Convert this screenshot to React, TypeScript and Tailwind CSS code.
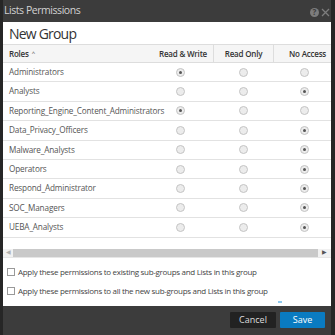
import React from 'react';

type Access = 'rw' | 'ro' | 'na';

const roles: { name: string; access: Access }[] = [
  { name: 'Administrators', access: 'rw' },
  { name: 'Analysts', access: 'na' },
  { name: 'Reporting_Engine_Content_Administrators', access: 'rw' },
  { name: 'Data_Privacy_Officers', access: 'na' },
  { name: 'Malware_Analysts', access: 'na' },
  { name: 'Operators', access: 'na' },
  { name: 'Respond_Administrator', access: 'na' },
  { name: 'SOC_Managers', access: 'na' },
  { name: 'UEBA_Analysts', access: 'na' },
];

function Radio({ checked }: { checked: boolean }) {
  return (
    <span className="w-[9px] h-[9px] rounded-full border border-[#c4c4c4] bg-[#ececec] flex items-center justify-center">
      {checked && <span className="w-[3px] h-[3px] rounded-full bg-[#555]" />}
    </span>
  );
}

export default function App() {
  return (
    <div className="w-[335px] h-[335px] bg-[#3c3c3c] flex flex-col overflow-hidden font-['Open_Sans',sans-serif] border-r-[4px] border-l-[3px] border-[#262626]">
      {/* title bar */}
      <div className="h-[22px] flex items-center justify-between pl-[1px] pr-[1px] shrink-0">
        <span className="text-[10.5px] text-[#d2d2d2] tracking-[-0.45px]">Lists Permissions</span>
        <div className="flex items-center gap-[2px] pt-[2px]">
          <span className="w-[9px] h-[9px] rounded-full bg-[#7d7d7d] text-[#3c3c3c] text-[8px] font-bold flex items-center justify-center leading-none">?</span>
          <svg width="9" height="9" viewBox="0 0 9 9" className="text-[#7d7d7d]">
            <path d="M1 1L8 8M8 1L1 8" stroke="currentColor" strokeWidth="1.3" />
          </svg>
        </div>
      </div>

      {/* content */}
      <div className="bg-white h-[284px] shrink-0 flex flex-col">
        <div className="h-[22px] flex items-center pl-[6px] text-[14px] text-[#333] tracking-[-0.8px]">New Group</div>

        <div className="overflow-hidden">
          <div className="w-[340px]">
            <div className="grid grid-cols-[147px_63px_60px_70px] h-[19px] bg-[#f5f5f5] border-y border-[#ddd] text-[8px] font-semibold text-[#333] tracking-[-0.2px]">
              <div className="flex items-center pl-[6px]">Roles <span className="ml-[3px] text-[#777] text-[6px]">^</span></div>
              <div className="flex items-center justify-center pl-[3px]">Read &amp; Write</div>
              <div className="flex items-center justify-center border-l border-[#ddd]">Read Only</div>
              <div className="flex items-center pl-[15px] border-l border-[#ddd]">No Access</div>
            </div>
            {roles.map((r) => (
              <div key={r.name} className="grid grid-cols-[147px_63px_60px_70px] h-[19.4px] border-b border-[#e2e2e2] text-[8.2px] text-[#555] tracking-[-0.15px]">
                <div className="flex items-center pl-[6px] whitespace-nowrap">{r.name}</div>
                <div className="flex items-center justify-center pr-[2px]"><Radio checked={r.access === 'rw'} /></div>
                <div className="flex items-center justify-center"><Radio checked={r.access === 'ro'} /></div>
                <div className="flex items-center pl-[27px]"><Radio checked={r.access === 'na'} /></div>
              </div>
            ))}
          </div>
        </div>

        {/* horizontal scrollbar */}
        <div className="mt-[11px] h-[9px] bg-[#f1f1f1] flex items-center border-b border-[#e6e6e6]">
          <span className="w-[10px] flex justify-center text-[#b0b0b0] text-[6px]">◀</span>
          <div className="flex-1 h-[8px] bg-[#c9c9c9]" />
          <span className="w-[13px] flex justify-center text-[#555] text-[6px]">▶</span>
        </div>

        <div className="flex flex-col gap-[7px] mt-[8px] pl-[4px] text-[8px] text-[#444] tracking-[-0.3px]">
          <label className="flex items-center gap-[3px]">
            <span className="w-[8px] h-[8px] border border-[#999] bg-white" />
            Apply these permissions to existing sub-groups and Lists in this group
          </label>
          <label className="flex items-center gap-[3px]">
            <span className="w-[8px] h-[8px] border border-[#999] bg-white" />
            Apply these permissions to all the new sub-groups and Lists in this group
          </label>
        </div>
        <div className="flex-1" />
        <div className="ml-[275px] mb-[3px] w-[4px] h-[2px] bg-[#8ec9ee]" />
      </div>

      {/* footer */}
      <div className="flex-1 flex justify-end items-start pt-[6px] pr-[6px] gap-[4px]">
        <button className="w-[46px] h-[16px] bg-[#222] text-[#ddd] text-[9px] rounded-[1px]">Cancel</button>
        <button className="w-[45px] h-[16px] bg-[#0a7bc1] text-white text-[9px] rounded-[1px]">Save</button>
      </div>
    </div>
  );
}
